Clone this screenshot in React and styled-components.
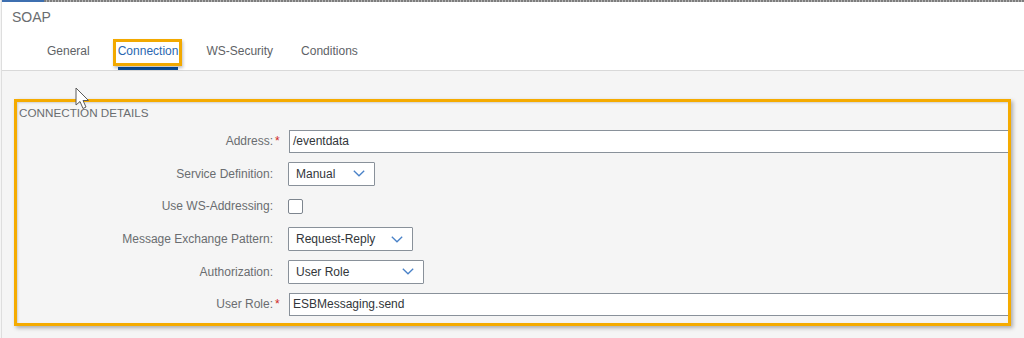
import React from "react";
import styled, { createGlobalStyle } from "styled-components";

const Global = createGlobalStyle`
  html, body { margin: 0; padding: 0; overflow: hidden; background: #f5f5f5; }
  body { font-family: "Liberation Sans", Arial, sans-serif; }
`;

const Page = styled.div`
  position: relative;
  width: 1024px;
  height: 338px;
  overflow: hidden;
  background: #f5f5f5;
  border-left: 1px solid #dedede;
  margin-left: 1px;
  box-sizing: border-box;
`;

const TopRule = styled.div`
  height: 2px;
  background:
    linear-gradient(#3d6fb0, #3d6fb0) 0 0 / 42px 2px no-repeat,
    repeating-linear-gradient(90deg, #7d7d7d 0 2px, #b4b4b4 2px 3px);
`;

const Header = styled.header`
  background: #ffffff;
  border-bottom: 1px solid #d9d9d9;
  padding-left: 10px;
`;

const Title = styled.div`
  height: 30px;
  line-height: 30px;
  font-size: 14px;
  color: #6a6d70;
`;

const TabBar = styled.nav`
  display: flex;
  gap: 28px;
  height: 38px;
  margin-left: 35px;
`;

const Tab = styled.div`
  position: relative;
  box-sizing: border-box;
  height: 38px;
  display: flex;
  align-items: center;
  padding-top: 3px;
  font-size: 12px;
  color: ${(p) => (p.$active ? "#2a68b2" : "#5e6266")};
  border-bottom: 3px solid ${(p) => (p.$active ? "#0b4f9c" : "transparent")};

  ${(p) =>
    p.$highlight &&
    `
    &::before {
      content: "";
      position: absolute;
      left: -5px;
      right: -4px;
      top: 7px;
      height: 27px;
      box-sizing: border-box;
      border: 3px solid #f2a900;
      box-shadow: 1px 2px 3px rgba(0,0,0,0.25);
    }
  `}
`;

const Content = styled.main`
  position: relative;
  padding: 28px 0 0 12px;
`;

const Section = styled.section`
  position: relative;
  width: 997px;
  box-sizing: border-box;
  padding: 6px 0 5px 0;

  &::after {
    content: "";
    position: absolute;
    inset: 0;
    border: 3px solid #f5ab00;
    box-shadow: 2px 2px 4px rgba(0, 0, 0, 0.3), inset 1px 1px 2px rgba(0,0,0,0.15);
    pointer-events: none;
  }
`;

const SectionTitle = styled.h2`
  margin: 0 0 0 5px;
  height: 16px;
  line-height: 16px;
  font-size: 11.7px;
  font-weight: 400;
  color: #6a6d70;
  text-transform: uppercase;
`;

const Form = styled.div`
  margin-top: 4px;
  display: grid;
  grid-template-columns: 267px 1fr;
  grid-auto-rows: 32.6px;
  column-gap: 7px;
  align-items: center;
`;

const Label = styled.label`
  display: flex;
  justify-content: flex-end;
  font-size: 12px;
  color: #6a6d70;
  white-space: nowrap;
`;

const Req = styled.span`
  width: 8px;
  padding-left: 2px;
  box-sizing: border-box;
  color: #d0271d;
  font-size: 12px;
`;

const Field = styled.div`
  display: flex;
  align-items: center;
`;

const TextInput = styled.div`
  box-sizing: border-box;
  width: calc(100% + 40px);
  height: 23px;
  margin-left: 1px;
  display: flex;
  align-items: center;
  padding-left: 3px;
  background: #ffffff;
  border: 1px solid #89919a;
  font-size: 12px;
  color: #32363a;
`;

const Select = styled.div`
  box-sizing: border-box;
  width: ${(p) => p.$w}px;
  height: 24px;
  display: flex;
  align-items: center;
  justify-content: space-between;
  padding: 0 9px 0 7px;
  background: #ffffff;
  border: 1px solid #89919a;
  border-radius: 1px;
  font-size: 12px;
  color: #32363a;
`;

const Checkbox = styled.div`
  box-sizing: border-box;
  width: 15px;
  height: 15px;
  background: #ffffff;
  border: 1px solid #7d858e;
  border-radius: 2px;
`;

const Cursor = styled.svg`
  position: absolute;
  left: 73px;
  top: 16px;
  filter: blur(0.3px);
`;

const Chevron = () => (
  <svg width="12" height="7" viewBox="0 0 12 7">
    <path d="M0.8 0.8 L6 5.8 L11.2 0.8" fill="none" stroke="#4a82c8" strokeWidth="1.3" />
  </svg>
);

const rows = [
  { label: "Address:", req: true, kind: "input", value: "/eventdata" },
  { label: "Service Definition:", kind: "select", value: "Manual", w: 87 },
  { label: "Use WS-Addressing:", kind: "check" },
  { label: "Message Exchange Pattern:", kind: "select", value: "Request-Reply", w: 125 },
  { label: "Authorization:", kind: "select", value: "User Role", w: 136 },
  { label: "User Role:", req: true, kind: "input", value: "ESBMessaging.send" },
];

export default function App() {
  return (
    <>
      <Global />
      <Page>
        <TopRule />
        <Header>
          <Title>SOAP</Title>
          <TabBar>
            <Tab>General</Tab>
            <Tab $active $highlight>Connection</Tab>
            <Tab>WS-Security</Tab>
            <Tab>Conditions</Tab>
          </TabBar>
        </Header>
        <Content>
          <Section>
            <SectionTitle>Connection Details</SectionTitle>
            <Form>
              {rows.map((r) => (
                <React.Fragment key={r.label}>
                  <Label>
                    {r.label}
                    <Req>{r.req ? "*" : ""}</Req>
                  </Label>
                  <Field>
                    {r.kind === "input" && <TextInput>{r.value}</TextInput>}
                    {r.kind === "select" && (
                      <Select $w={r.w}>
                        <span>{r.value}</span>
                        <Chevron />
                      </Select>
                    )}
                    {r.kind === "check" && <Checkbox />}
                  </Field>
                </React.Fragment>
              ))}
            </Form>
          </Section>
          <Cursor width="18" height="24" viewBox="0 0 18 24">
            <path
              d="M1 1 L1 18 L5 14.5 L8 21.5 L11 20 L8 13.5 L13.5 13.5 Z"
              fill="#ffffff"
              stroke="#5a5a5a"
              strokeWidth="1"
              strokeLinejoin="round"
            />
          </Cursor>
        </Content>
      </Page>
    </>
  );
}
